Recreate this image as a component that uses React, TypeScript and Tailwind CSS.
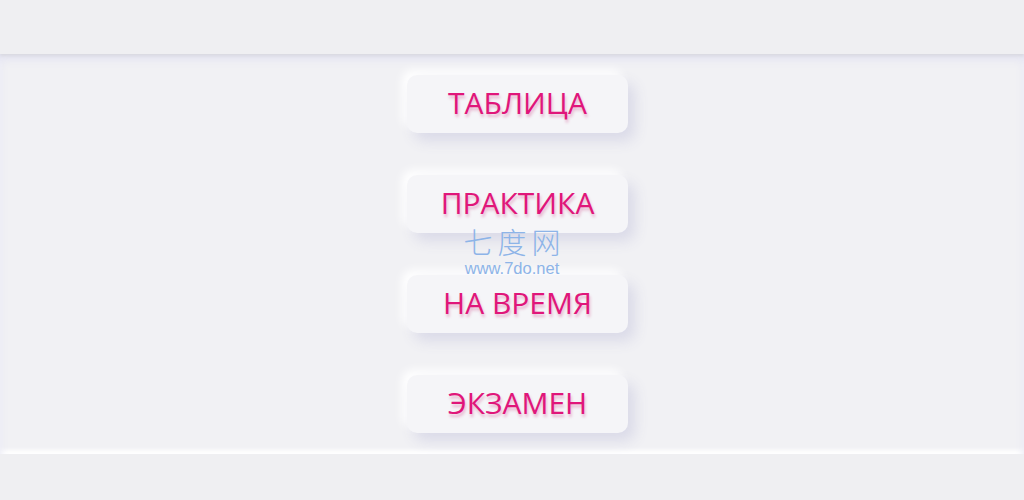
import React from 'react';

const items = ['ТАБЛИЦА', 'ПРАКТИКА', 'НА ВРЕМЯ', 'ЭКЗАМЕН'];

function MenuButton({ label }: { label: string }) {
  return (
    <button className="w-[221px] h-[58px] rounded-[10px] bg-[#f5f5f8] shadow-[7px_8px_14px_#dadae8,-5px_-5px_10px_#ffffff] flex items-center justify-center pb-[3px] text-[30px] text-[#e0167a] [text-shadow:1px_3px_3px_rgba(200,30,110,0.3)]">
      {label}
    </button>
  );
}

export default function App() {
  return (
    <div className="w-[1024px] h-[500px] bg-[#efeff2] flex flex-col overflow-hidden relative" style={{ fontFamily: '"Open Sans", "Noto Sans", sans-serif' }}>
      <div className="h-[54px] shrink-0 bg-[#efeff2] shadow-[0_2px_3px_#d9d9e0] relative z-10" />
      <main className="h-[400px] shrink-0 bg-[#f1f1f4] shadow-[inset_0_6px_8px_#e4e4f2,inset_0_-4px_4px_#ffffff] flex flex-col items-center pt-[21px] gap-[42px] pl-[11px]">
        {items.map((item) => (
          <MenuButton key={item} label={item} />
        ))}
      </main>
      <div className="flex-1 bg-[#efeff2]" />

      <div className="absolute left-[456px] top-[226px] w-[112px] flex flex-col items-center pointer-events-none text-[#8db4e8]">
        <span className="text-[29px] leading-[30px] tracking-[5px] pl-[5px]" style={{ fontFamily: '"Noto Sans CJK SC", sans-serif', fontWeight: 300 }}>七度网</span>
        <span className="mt-[4px] text-[16.5px] leading-[16px]" style={{ fontFamily: '"Liberation Sans", Arial, sans-serif' }}>www.7do.net</span>
      </div>
    </div>
  );
}
